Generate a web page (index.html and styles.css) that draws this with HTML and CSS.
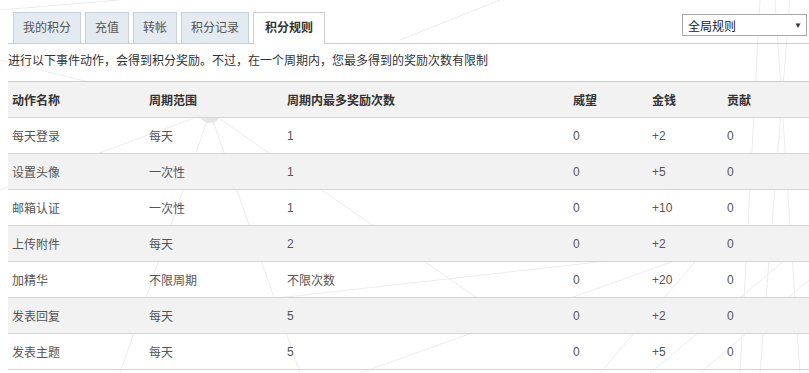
FILE: index.html
```html
<!DOCTYPE html>
<html lang="zh-CN">
<head>
<meta charset="utf-8">
<title>积分规则</title>
<link rel="stylesheet" href="styles.css">
</head>
<body>
<svg class="bg" width="809" height="373" viewBox="0 0 809 373" aria-hidden="true">
  <g stroke="#ececec" stroke-width="1" fill="none">
    <line x1="210" y1="112" x2="0" y2="190"/>
    <line x1="210" y1="112" x2="120" y2="373"/>
    <line x1="210" y1="112" x2="300" y2="373"/>
    <line x1="210" y1="112" x2="480" y2="300"/>
    <line x1="210" y1="112" x2="0" y2="60"/>
    <line x1="705" y1="250" x2="360" y2="373"/>
    <line x1="705" y1="250" x2="600" y2="373"/>
    <line x1="705" y1="250" x2="260" y2="300"/>
    <line x1="760" y1="0" x2="740" y2="373"/>
    <line x1="775" y1="0" x2="800" y2="373"/>
    <line x1="790" y1="0" x2="760" y2="373"/>
    <line x1="809" y1="240" x2="650" y2="373"/>
    <line x1="700" y1="373" x2="809" y2="280"/>
    <line x1="0" y1="10" x2="120" y2="0"/>
    <line x1="400" y1="40" x2="500" y2="0"/>
  </g>
  <circle cx="210" cy="112" r="11" fill="#e6e6e6"/>
</svg>
<div class="page">
  <div class="tabbar">
    <ul class="tabs">
      <li class="tab">我的积分</li>
      <li class="tab">充值</li>
      <li class="tab">转帐</li>
      <li class="tab">积分记录</li>
      <li class="tab active">积分规则</li>
    </ul>
    <div class="select">
      <span>全局规则</span>
      <span class="arrow">▼</span>
    </div>
  </div>
  <p class="desc">进行以下事件动作，会得到积分奖励。不过，在一个周期内，您最多得到的奖励次数有限制</p>
  <table class="rules">
    <colgroup>
      <col class="c-name">
      <col class="c-period">
      <col class="c-max">
      <col class="c-w">
      <col class="c-m">
      <col class="c-g">
    </colgroup>
    <thead>
      <tr><th>动作名称</th><th>周期范围</th><th>周期内最多奖励次数</th><th>威望</th><th>金钱</th><th>贡献</th></tr>
    </thead>
    <tbody>
      <tr><td>每天登录</td><td>每天</td><td>1</td><td>0</td><td>+2</td><td>0</td></tr>
      <tr><td>设置头像</td><td>一次性</td><td>1</td><td>0</td><td>+5</td><td>0</td></tr>
      <tr><td>邮箱认证</td><td>一次性</td><td>1</td><td>0</td><td>+10</td><td>0</td></tr>
      <tr><td>上传附件</td><td>每天</td><td>2</td><td>0</td><td>+2</td><td>0</td></tr>
      <tr><td>加精华</td><td>不限周期</td><td>不限次数</td><td>0</td><td>+20</td><td>0</td></tr>
      <tr><td>发表回复</td><td>每天</td><td>5</td><td>0</td><td>+2</td><td>0</td></tr>
      <tr><td>发表主题</td><td>每天</td><td>5</td><td>0</td><td>+5</td><td>0</td></tr>
    </tbody>
  </table>
</div>
</body>
</html>
```
FILE: styles.css
```css
html, body {
  margin: 0;
  padding: 0;
  background: #fff;
  overflow: hidden;
}
body {
  font-family: "Liberation Sans", "Noto Sans CJK SC", sans-serif;
  font-size: 12px;
  color: #333;
  position: relative;
  width: 809px;
  height: 373px;
}
.bg {
  position: absolute;
  left: 0;
  top: 0;
  z-index: 0;
}
.page {
  position: relative;
  z-index: 1;
  padding-left: 8px;
}
.tabbar {
  display: flex;
  justify-content: space-between;
  align-items: flex-start;
  padding-top: 12px;
  border-bottom: 1px solid #ccc;
  height: 31px;
}
.tabs {
  list-style: none;
  margin: 0 0 0 5px;
  padding: 0;
  display: flex;
  gap: 4px;
}
.tab {
  height: 30px;
  line-height: 30px;
  padding: 0 9px;
  border: 1px solid #c9d1d8;
  border-bottom: none;
  background: #e3eaf0;
  color: #555;
}
.tab.active {
  background: #fff;
  border-color: #ccc;
  font-weight: bold;
  color: #333;
  height: 31px;
  padding: 0 11px;
}
.select {
  margin-top: 2px;
  margin-right: 2px;
  height: 20px;
  border: 1px solid #a9a9a9;
  background: #fff;
  display: flex;
  align-items: center;
  justify-content: space-between;
  padding: 0 0 0 5px;
  box-sizing: content-box;
  width: 118px;
  color: #222;
}
.select .arrow {
  font-size: 8px;
  color: #333;
  margin-right: 4px;
}
.desc {
  margin: 0;
  padding: 9px 0 12px;
  line-height: 16px;
  color: #333;
}
.rules {
  border-collapse: collapse;
  width: 801px;
  table-layout: fixed;
  border-top: 1px solid #ccc;
}
.c-name { width: 137px; }
.c-period { width: 138px; }
.c-max { width: 286px; }
.c-w { width: 79px; }
.c-m { width: 75px; }
.c-g { width: 86px; }
.rules th, .rules td {
  text-align: left;
  padding: 0 4px;
  height: 35px;
  border-bottom: 1px solid #d4d4d4;
  white-space: nowrap;
}
.rules th {
  background: #f2f2f2;
  font-weight: bold;
  color: #333;
}
.rules td {
  color: #555;
}
.rules tbody tr:nth-child(even) td {
  background: #f2f2f2;
}
```
